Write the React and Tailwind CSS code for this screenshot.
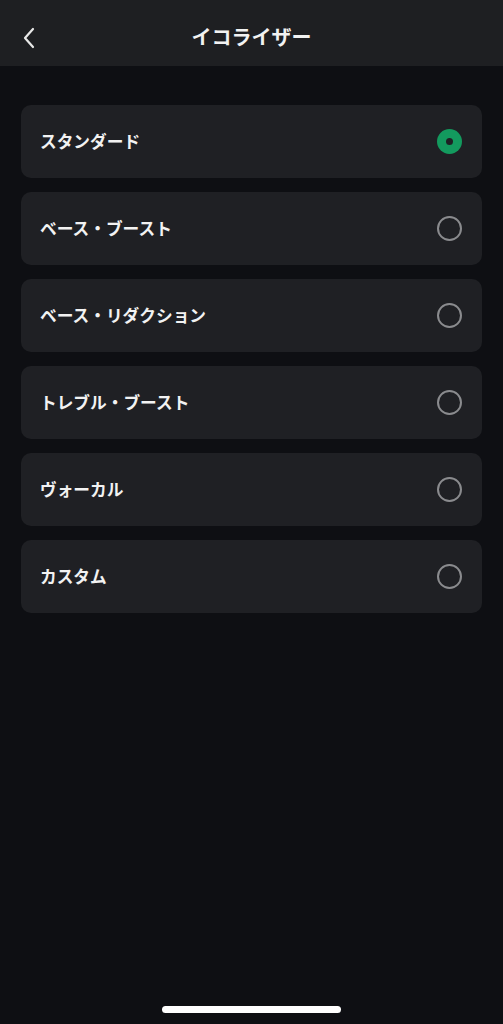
import React from "react";

const presets = [
  "スタンダード",
  "ベース・ブースト",
  "ベース・リダクション",
  "トレブル・ブースト",
  "ヴォーカル",
  "カスタム",
];

export default function App() {
  const selected = 0;
  return (
    <div
      className="w-[503px] h-[1024px] bg-[#0e0f13] flex flex-col text-white"
      style={{ fontFamily: '"Noto Sans CJK JP", "Noto Sans", sans-serif' }}
    >
      {/* Header */}
      <div className="h-[66px] shrink-0 bg-[#1e1f22] flex items-center relative">
        <button className="absolute left-[17px] top-[24px] w-[24px] h-[28px] flex items-center justify-center">
          <svg width="14" height="24" viewBox="0 0 14 24" fill="none">
            <path d="M11 3 L3 12 L11 21" stroke="#e8e8e8" strokeWidth="2.2" strokeLinecap="round" strokeLinejoin="round" />
          </svg>
        </button>
        <h1 className="flex-1 text-center text-[20px] font-bold pt-[8px] text-[#f2f2f2]">イコライザー</h1>
      </div>

      {/* List */}
      <div className="flex-1 flex flex-col gap-[14px] px-[21px] pt-[39px]">
        {presets.map((p, i) => (
          <div
            key={p}
            className="h-[73px] rounded-[10px] bg-[#1f2024] flex items-center justify-between pl-[19px] pr-[20px]"
          >
            <span className="text-[16.7px] font-bold text-[#f2f2f2]">{p}</span>
            {i === selected ? (
              <span className="w-[25px] h-[25px] rounded-full bg-[#139a5e] flex items-center justify-center">
                <span className="w-[7px] h-[7px] rounded-full bg-[#1f2024]" />
              </span>
            ) : (
              <span className="w-[25px] h-[25px] rounded-full border-2 border-[#8a8b8e]" />
            )}
          </div>
        ))}
      </div>

      {/* Home indicator */}
      <div className="h-[34px] shrink-0 flex items-start justify-center pt-[16px]">
        <div className="w-[179px] h-[7px] rounded-full bg-white" />
      </div>
    </div>
  );
}
